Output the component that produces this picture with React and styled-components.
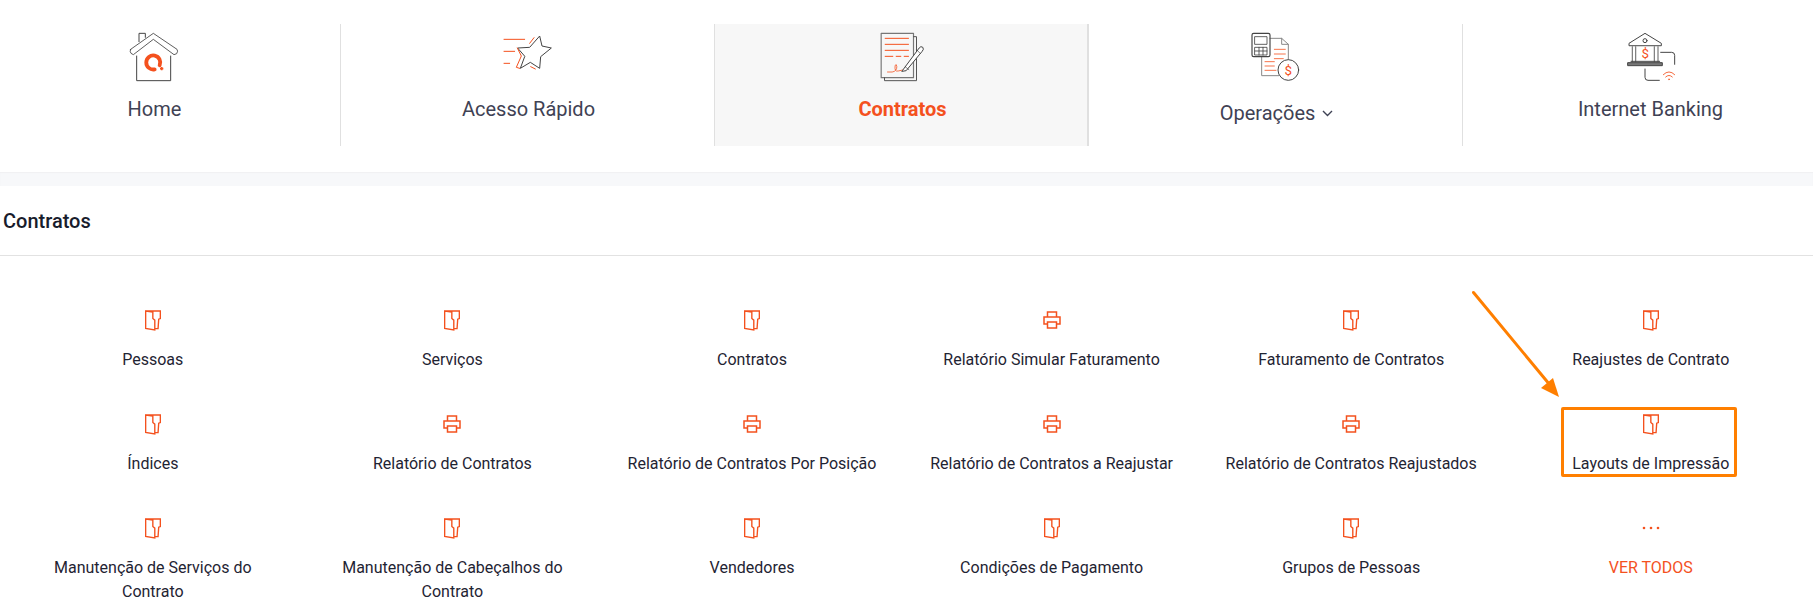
import React from 'react';
import styled, { createGlobalStyle } from 'styled-components';

const accent = '#f4511e';
const ink = '#444';

const GlobalStyle = createGlobalStyle`
    html, body {
        margin: 0;
        padding: 0;
        background: #fff;
        overflow: hidden;
        font-family: Roboto, "Liberation Sans", sans-serif;
    }
`;

const Page = styled.div`
    position: relative;
    width: 1813px;
    height: 615px;
    overflow: hidden;
`;

const Nav = styled.nav`
    display: grid;
    grid-template-columns: repeat(5, 374px);
    width: 1870px;
    margin-left: -34px;
    padding: 24px 0;
    height: 122px;
`;

const Tab = styled.div`
    display: flex;
    flex-direction: column;
    align-items: center;
    height: 122px;
    box-sizing: border-box;
    padding-left: 3px;
    border-left: 1px solid ${p => (p.$first ? 'transparent' : '#e0e0e0')};
    border-right: 1px solid ${p => (p.$active ? '#e0e0e0' : 'transparent')};
    background: ${p => (p.$active ? '#f7f7f7' : 'transparent')};
`;

const TabIcon = styled.svg`
    display: block;
    width: ${p => p.$w || 70}px;
    height: 60px;
    flex: none;
`;

const TabLabel = styled.div`
    display: flex;
    align-items: center;
    gap: 7px;
    margin-top: ${p => (p.$drop ? 15 : 11)}px;
    font-size: 20px;
    line-height: 28px;
    font-weight: ${p => (p.$active ? 700 : 400)};
    color: ${p => (p.$active ? accent : '#3f4254')};
`;

const Band = styled.div`
    height: 14px;
    margin-top: 2px;
    background: #f7f8fa;
    box-shadow: inset 0 1px 1px #f0f0f2;
`;

const Header = styled.h2`
    margin: 0;
    height: 70px;
    box-sizing: border-box;
    padding: 0 0 0 3px;
    display: flex;
    align-items: center;
    font-size: 20px;
    font-weight: 500;
    color: #181c2c;
    border-bottom: 1px solid #e2e2e2;
`;

const Grid = styled.div`
    display: grid;
    grid-template-columns: repeat(6, 299.6px);
    grid-auto-rows: 64px;
    row-gap: 40px;
    padding: 52px 0 0 3px;
`;

const Item = styled.div`
    display: flex;
    flex-direction: column;
    align-items: center;
    text-align: center;
`;

const ItemIcon = styled.div`
    flex: none;
    height: 24px;
    display: flex;
    align-items: center;
    justify-content: center;
    margin-bottom: 16px;
    color: ${accent};
`;

const ItemLabel = styled.div`
    flex: none;
    width: 255px;
    font-size: 16px;
    line-height: 24px;
    color: ${p => (p.$more ? accent : '#1f2433')};
`;

const Highlight = styled.div`
    position: absolute;
    left: 1561px;
    top: 407px;
    width: 176px;
    height: 70px;
    box-sizing: border-box;
    border: 3px solid #ff7f00;
    border-radius: 2px;
`;

const ArrowOverlay = styled.svg`
    position: absolute;
    left: 1460px;
    top: 280px;
    width: 110px;
    height: 125px;
`;

const Dollar = styled.text`
    font-family: Roboto, sans-serif;
    fill: ${accent};
    stroke: none;
    text-anchor: middle;
`;

const HomeIcon = () => (
    <TabIcon viewBox="0 12 210 180" fill="none" stroke={ink} strokeWidth="3" strokeLinejoin="round" strokeLinecap="round">
        <path d="M57 65V40H76V52" />
        <path d="M32 88L100 40L171 88Q175 93 170 101L162 104L100 58L40 104L33 100Q28 94 32 88Z" strokeWidth="2.6" />
        <path d="M50 108V182H152V108" />
        <path d="M119 136A21 21 0 1 0 104 148" stroke={accent} strokeWidth="11.5" />
        <path d="M120 146H130M125 141V151" stroke={accent} strokeWidth="5" strokeLinecap="butt" />
    </TabIcon>
);

const StarIcon = () => (
    <TabIcon viewBox="-2 12 210 180" fill="none" stroke={ink} strokeWidth="3" strokeLinejoin="round" strokeLinecap="round">
        <path d="M70 84L105 82L135 48L142 78L170 84L138 110L135 145L107 127L77 145L90 110Z" />
        <g stroke={accent}>
            <path d="M28 58H90M28 94H60M28 130H45" />
            <path d="M105 70L118 53M68 84L80 108L65 142L75 145M108 140L122 147" />
        </g>
    </TabIcon>
);

const ContractIcon = () => (
    <TabIcon viewBox="-6.5 12 210 180" fill="none" stroke="#666" strokeWidth="3" strokeLinejoin="round" strokeLinecap="round">
        <rect x="33" y="40" width="97" height="133" stroke="#777" strokeWidth="3.5" />
        <path d="M130 50H139V182H43V173" stroke="#555" />
        <g stroke={accent}>
            <path d="M45 55H115M45 73H115M45 91H115" />
            <path d="M45 109H68M78 109H92M102 109H115" />
            <path d="M52 156H66Q80 154 80 140Q79 130 75 136Q72 156 84 153L98 150" strokeWidth="2.8" opacity=".85" />
        </g>
        <path d="M98 150L147 84Q152 77 158 82Q162 88 156 94L108 152L96 154Z" fill="#fff" stroke="#444" strokeWidth="3" />
        <path d="M105 140L116 149M140 90L150 100" stroke="#444" strokeWidth="2" />
    </TabIcon>
);

const OperationsIcon = () => (
    <TabIcon $w={80} viewBox="-7 12 240 180" fill="none" stroke={ink} strokeWidth="3" strokeLinejoin="round" strokeLinecap="round">
        <path d="M92 55H127L147 73V125M127 55V73H147M67 110V167H118" stroke="#888" />
        <rect x="38" y="40" width="54" height="70" rx="5" strokeWidth="3.5" />
        <rect x="47" y="50" width="36" height="23" strokeWidth="2.5" />
        <path d="M47 82H83V105H47ZM47 93H83M59 82V105M71 82V105" strokeWidth="2.5" />
        <g stroke={accent} opacity=".8">
            <path d="M105 88H138M105 102H138M105 116H132M77 125H105M77 138H105M77 151H110" />
        </g>
        <circle cx="147" cy="150" r="31" fill="#fff" />
        <Dollar x="147" y="164" fontSize="40">$</Dollar>
    </TabIcon>
);

const BankIcon = () => (
    <TabIcon $w={80} viewBox="1 12 240 180" fill="none" stroke={ink} strokeWidth="3" strokeLinejoin="round" strokeLinecap="round">
        <path d="M55 76V70L103 40L152 70V76Z" />
        <circle cx="103" cy="62" r="6" />
        <path d="M65 80V125M75 80V125M131 80V125M142 80V125" stroke="#777" strokeWidth="3.5" />
        <path d="M61 124H147" />
        <rect x="52" y="128" width="103" height="9" fill="#777" />
        <Dollar x="104" y="114" fontSize="40">$</Dollar>
        <path d="M150 97H183Q192 97 192 106V133M103 147V172Q103 181 112 181H146" />
        <g stroke={accent} opacity=".85">
            <path d="M158 164Q175 147 192 164M165 171Q175 161 185 171" />
            <circle cx="175" cy="178" r="1.5" />
        </g>
    </TabIcon>
);

const DoorIcon = () => (
    <svg width="16" height="21" viewBox="73 45 49 62" fill="none" stroke="currentColor" strokeWidth="4.2" strokeLinejoin="miter">
        <path d="M75 47H120V70L115 72L113 101H103M75 47V100L103 105V75L97 70V50L75 47Z" />
    </svg>
);

const PrinterIcon = () => (
    <svg width="18" height="18" viewBox="0 0 18 18" fill="none" stroke="currentColor" strokeWidth="1.5">
        <path d="M4.5 6V1H13.5V6" />
        <path d="M4.5 13H1V6H17V13H13.5" />
        <rect x="4.5" y="11" width="9" height="6" />
    </svg>
);

const MoreIcon = () => (
    <svg width="18" height="4" viewBox="0 0 18 4" fill="currentColor">
        <circle cx="2" cy="2" r="1.3" />
        <circle cx="9" cy="2" r="1.3" />
        <circle cx="16" cy="2" r="1.3" />
    </svg>
);

const tabs = [
    { label: 'Home', Icon: HomeIcon },
    { label: 'Acesso Rápido', Icon: StarIcon },
    { label: 'Contratos', Icon: ContractIcon, active: true },
    { label: 'Operações', Icon: OperationsIcon, drop: true },
    { label: 'Internet Banking', Icon: BankIcon },
];

const items = [
    ['Pessoas', 'door'],
    ['Serviços', 'door'],
    ['Contratos', 'door'],
    ['Relatório Simular Faturamento', 'print'],
    ['Faturamento de Contratos', 'door'],
    ['Reajustes de Contrato', 'door'],
    ['Índices', 'door'],
    ['Relatório de Contratos', 'print'],
    ['Relatório de Contratos Por Posição', 'print'],
    ['Relatório de Contratos a Reajustar', 'print'],
    ['Relatório de Contratos Reajustados', 'print'],
    ['Layouts de Impressão', 'door'],
    ['Manutenção de Serviços do Contrato', 'door'],
    ['Manutenção de Cabeçalhos do Contrato', 'door'],
    ['Vendedores', 'door'],
    ['Condições de Pagamento', 'door'],
    ['Grupos de Pessoas', 'door'],
    ['VER TODOS', 'more'],
];

const itemIcons = { door: DoorIcon, print: PrinterIcon, more: MoreIcon };

const App = () => (
    <Page>
        <GlobalStyle />
        <Nav>
            {tabs.map((tab, index) => (
                <Tab key={tab.label} $first={index === 0} $active={tab.active}>
                    <tab.Icon />
                    <TabLabel $active={tab.active} $drop={tab.drop}>
                        {tab.label}
                        {tab.drop && (
                            <svg width="11" height="7" viewBox="0 0 11 7" fill="none" stroke="#3f4254" strokeWidth="1.4">
                                <path d="M1 1L5.5 5.5L10 1" />
                            </svg>
                        )}
                    </TabLabel>
                </Tab>
            ))}
        </Nav>
        <Band />
        <Header>Contratos</Header>
        <Grid>
            {items.map(([label, icon]) => {
                const Icon = itemIcons[icon];
                return (
                    <Item key={label}>
                        <ItemIcon><Icon /></ItemIcon>
                        <ItemLabel $more={icon === 'more'}>{label}</ItemLabel>
                    </Item>
                );
            })}
        </Grid>
        <Highlight />
        <ArrowOverlay viewBox="0 0 110 125" fill="none">
            <path d="M13.5 12.5L90 105" stroke="#ff7f00" strokeWidth="3" strokeLinecap="round" />
            <path d="M99 117L81 108L93 98Z" fill="#ff7f00" />
        </ArrowOverlay>
    </Page>
);

export default App;
